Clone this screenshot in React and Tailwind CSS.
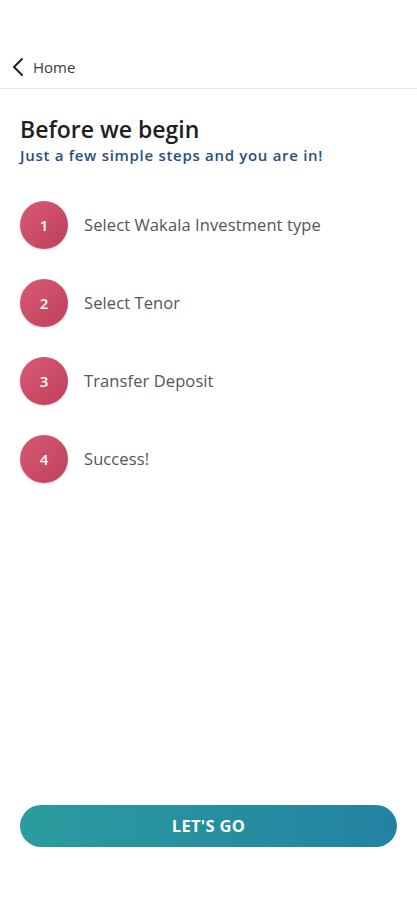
export default function App() {
  const steps = ["Select Wakala Investment type", "Select Tenor", "Transfer Deposit", "Success!"];
  return (
    <div className="w-[417px] h-[900px] bg-white flex flex-col" style={{ fontFamily: "'Open Sans', 'Noto Sans', sans-serif" }}>
      <div className="h-[89px] flex items-end pb-[11px] pl-[11px] border-b border-[#e6e6e6]">
        <div className="flex items-center gap-[8px]">
          <svg width="14" height="20" viewBox="0 0 14 20" fill="none">
            <path d="M11 2 L3 10 L11 18" stroke="#222" strokeWidth="2" strokeLinecap="round" strokeLinejoin="round" />
          </svg>
          <span className="text-[15px] text-[#3a3a3a] leading-[20px]">Home</span>
        </div>
      </div>
      <div className="px-[20px] pt-[26px]">
        <h1 className="text-[23px] font-semibold text-[#1e1e24] leading-[28px]">Before we begin</h1>
        <p className="text-[15px] font-semibold text-[#2a4f7a] mt-[2px] leading-[20px] tracking-[0.7px]">Just a few simple steps and you are in!</p>
        <div className="mt-[36px] flex flex-col gap-[30px]">
          {steps.map((s, i) => (
            <div key={i} className="flex items-center gap-[16px]">
              <div className="w-[48px] h-[48px] rounded-full bg-gradient-to-br from-[#d95a74] to-[#bd3f5b] flex items-center justify-center text-white text-[15px] font-semibold shadow-[0_1px_2px_rgba(0,0,0,0.15)]">{i + 1}</div>
              <span className="text-[16.5px] text-[#555555] tracking-[0.1px]">{s}</span>
            </div>
          ))}
        </div>
      </div>
      <div className="flex-1" />
      <div className="px-[20px] pb-[53px]">
        <button className="w-full h-[42px] rounded-full bg-gradient-to-r from-[#2a9c9e] to-[#2382a3] text-white font-bold text-[16.5px] tracking-[0.3px]">LET'S GO</button>
      </div>
    </div>
  );
}
